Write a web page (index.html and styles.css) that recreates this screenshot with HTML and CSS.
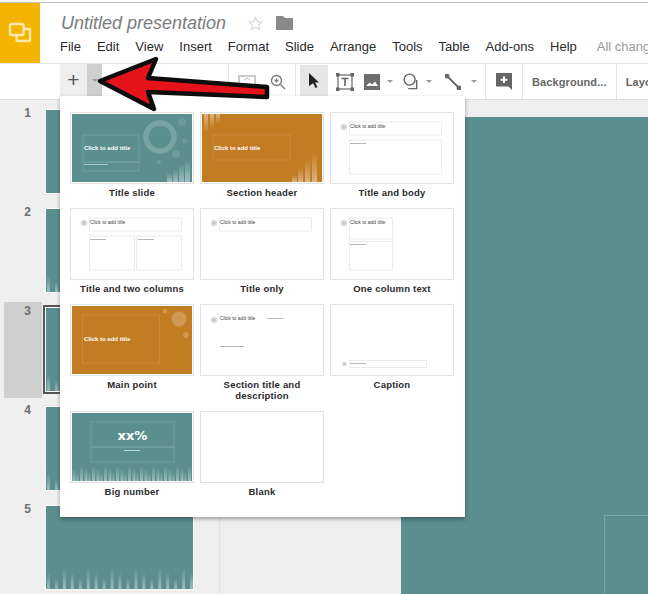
FILE: index.html
```html
<!DOCTYPE html>
<html lang="en">
<head>
<meta charset="utf-8">
<title>Untitled presentation</title>
<link rel="stylesheet" href="styles.css">
</head>
<body>
<svg class="defs" aria-hidden="true">
  <defs>
    <linearGradient id="fade" x1="0" y1="0" x2="0" y2="1">
      <stop offset="0" stop-color="#fff" stop-opacity="0.02"/>
      <stop offset="1" stop-color="#fff" stop-opacity="0.42"/>
    </linearGradient>
    <radialGradient id="blob">
      <stop offset="0" stop-color="#bbb"/>
      <stop offset="1" stop-color="#eee"/>
    </radialGradient>
    <radialGradient id="glow">
      <stop offset="0" stop-color="#fff" stop-opacity="0.2"/>
      <stop offset="0.75" stop-color="#fff" stop-opacity="0.24"/>
      <stop offset="1" stop-color="#fff" stop-opacity="0"/>
    </radialGradient>
    <pattern id="grass" width="24" height="20" patternUnits="userSpaceOnUse">
      <rect x="1" y="4" width="3" height="16" rx="1" fill="url(#fade)"/>
      <rect x="9" y="10" width="3" height="10" rx="1" fill="url(#fade)"/>
      <rect x="17" y="0" width="3" height="20" rx="1" fill="url(#fade)"/>
    </pattern>
    <pattern id="grass-small" width="12" height="14" patternUnits="userSpaceOnUse">
      <rect x="0.500" y="2" width="3" height="12" fill="url(#fade)"/>
      <rect x="4.500" y="6" width="2" height="8" fill="url(#fade)"/>
      <rect x="8" y="0" width="3" height="14" fill="url(#fade)"/>
    </pattern>
  </defs>
</svg>

<div class="app">
  <header class="topbar">
    <div class="logo">
      <svg width="24" height="24" viewBox="0 0 24 24" fill="none" stroke="#fde9b0" stroke-width="2.400">
        <rect x="2" y="3" width="13.500" height="11" rx="1.500"/>
        <path d="M16 8h4.500a1.500 1.500 0 0 1 1.500 1.500v9a1.500 1.500 0 0 1-1.500 1.500H10a1.500 1.500 0 0 1-1.500-1.500V14"/>
      </svg>
    </div>
    <div class="titles">
      <div class="title-row">
        <span class="doc-title">Untitled presentation</span>
        <svg class="star" width="15" height="15" viewBox="0 0 17 17" fill="none" stroke="#d4d4d4" stroke-width="1.200"><path d="M8.500 1.500l2.100 4.900 5.200.5-3.900 3.500 1.200 5.200-4.600-2.800-4.600 2.800 1.200-5.200L1.200 6.900l5.200-.5z"/></svg>
        <svg class="folder" width="17" height="14" viewBox="0 0 17 14"><path d="M0 0h7l2 2h8v12H0z" fill="#8a8a8a"/></svg>
      </div>
      <nav class="menu">
        <span>File</span><span>Edit</span><span>View</span><span>Insert</span><span>Format</span><span>Slide</span><span>Arrange</span><span>Tools</span><span>Table</span><span>Add-ons</span><span>Help</span><span class="saved">All changes saved</span>
      </nav>
    </div>
  </header>

  <div class="toolbar">
    <div class="tool-new">+</div>
    <div class="tool-drop"><i class="caret"></i></div>
    <div class="tool-hidden"></div>
    <div class="sep"></div>
    <svg class="ic-fit" width="18" height="14" viewBox="0 0 18 14" fill="none" stroke="#bbb" stroke-width="1.500"><rect x="1" y="1" width="16" height="12"/><path d="M6 5l3-2 3 2M6 9l3 2 3-2" stroke-width="1"/></svg>
    <svg class="ic-zoom" width="16" height="16" viewBox="0 0 16 16" fill="none" stroke="#777" stroke-width="1.300"><circle cx="6.500" cy="6.500" r="5"/><path d="M10.500 10.500l4.500 4.500M4.500 6.500h4M6.500 4.500v4"/></svg>
    <div class="sep sep-b"></div>
    <div class="tool-cursor">
      <svg width="12" height="15" viewBox="0 0 12 15"><path d="M1 0l10 9.500H7l2.500 4.500-2 1-2.300-4.700L1 13z" fill="#222"/></svg>
    </div>
    <svg class="ic-text" width="18" height="18" viewBox="0 0 18 18" fill="none" stroke="#666" stroke-width="1.200"><rect x="2" y="2" width="14" height="14"/><g fill="#666" stroke="none"><rect x="0" y="0" width="3.500" height="3.500"/><rect x="14.500" y="0" width="3.500" height="3.500"/><rect x="0" y="14.500" width="3.500" height="3.500"/><rect x="14.500" y="14.500" width="3.500" height="3.500"/></g><path d="M5.500 5.500h7M9 5.500v7.500" stroke-width="1.600"/></svg>
    <svg class="ic-image" width="16" height="16" viewBox="0 0 16 16"><path d="M0 0h16v16H0z" fill="#6e6e6e"/><path d="M2 12l3.500-3.500 2.500 2 3-3 3 4.500z" fill="#fff"/></svg>
    <i class="caret caret-image"></i>
    <svg class="ic-shape" width="17" height="17" viewBox="0 0 18 18" fill="none" stroke="#666" stroke-width="1.500"><circle cx="7" cy="7" r="5.800"/><path d="M14.500 7.500V16.500H5.500"/></svg>
    <i class="caret caret-shape"></i>
    <svg class="ic-line" width="16" height="16" viewBox="0 0 16 16" stroke="#666" stroke-width="1.800" fill="#666"><path d="M2 2l12 12"/><circle cx="2" cy="2" r="1.500"/><circle cx="14" cy="14" r="1.500"/></svg>
    <i class="caret caret-line"></i>
    <div class="sep sep-c"></div>
    <svg class="ic-comment" width="16" height="17" viewBox="0 0 16 17"><path d="M0 0h16v17l-3.500-3.500H0z" fill="#666"/><path d="M8 3.500v6.500M4.700 6.750h6.600" stroke="#fff" stroke-width="2"/></svg>
    <div class="sep"></div>
    <div class="tool-text">Background...</div>
    <div class="sep"></div>
    <div class="tool-text">Layout</div>
  </div>

  <main class="workspace">
    <aside class="filmstrip">
      <div class="film-row"><span class="film-num">1</span><div class="film-thumb"></div></div>
      <div class="film-row"><span class="film-num">2</span><div class="film-thumb"><svg class="film-grass" viewBox="0 0 148 20"><rect width="148" height="20" fill="url(#grass)"/></svg></div></div>
      <div class="film-row is-selected"><span class="film-num">3</span><div class="film-thumb"><svg class="film-grass" viewBox="0 0 148 20"><rect width="148" height="20" fill="url(#grass)"/></svg></div></div>
      <div class="film-row"><span class="film-num">4</span><div class="film-thumb"><svg class="film-grass" viewBox="0 0 148 20"><rect width="148" height="20" fill="url(#grass)"/></svg></div></div>
      <div class="film-row"><span class="film-num">5</span><div class="film-thumb"><svg class="film-grass" viewBox="0 0 148 20"><rect width="148" height="20" fill="url(#grass)"/></svg></div></div>
    </aside>
    <section class="canvas">
      <div class="slide"><div class="slide-box"></div></div>
    </section>
  </main>

  <div class="layouts">
    <figure class="layout">
      <svg class="thumb" viewBox="0 0 122 70">
        <rect x="1" y="1" width="120" height="68" fill="#5b8e8e"/>
        <g fill="none" stroke="#7fa8a8" stroke-width="0.600"><rect x="12" y="22" width="56" height="27"/><rect x="12" y="49" width="56" height="9"/></g>
        <circle cx="89" cy="24" r="14" fill="none" stroke="#7aa3a3" stroke-width="5.500"/>
        <g fill="#6f9a9a"><circle cx="111" cy="9" r="4"/><circle cx="114" cy="28" r="2.500"/><circle cx="105" cy="41" r="4"/><circle cx="88" cy="49" r="2"/></g>
        <g fill="url(#fade)"><rect x="96" y="60" width="5" height="9"/><rect x="102" y="57" width="5" height="12"/><rect x="108" y="52" width="5" height="17"/><rect x="114" y="47" width="5" height="22"/></g>
        <text class="t-white" x="13" y="37">Click to add title</text>
        <rect x="13" y="51" width="24" height="1" fill="#a9c6c6"/>
      </svg>
      <figcaption>Title slide</figcaption>
    </figure>
    <figure class="layout">
      <svg class="thumb" viewBox="0 0 122 70">
        <rect x="1" y="1" width="120" height="68" fill="#c27c22"/>
        <rect x="12" y="22" width="77" height="25" fill="none" stroke="#d0954a" stroke-width="0.600"/>
        <g fill="url(#fade)"><rect x="3" y="1" width="4" height="18" transform="rotate(180 5 10)"/><rect x="9" y="1" width="4" height="14" transform="rotate(180 11 8)"/><rect x="15" y="1" width="4" height="9" transform="rotate(180 17 5.500)"/><rect x="91" y="62" width="5" height="7"/><rect x="97" y="55" width="5" height="14"/><rect x="104" y="47" width="5" height="22"/><rect x="111" y="40" width="5" height="29"/></g>
        <text class="t-white" x="13" y="37">Click to add title</text>
      </svg>
      <figcaption>Section header</figcaption>
    </figure>
    <figure class="layout">
      <svg class="thumb" viewBox="0 0 122 70">
        <circle cx="13" cy="14" r="3.500" fill="url(#blob)"/>
        <g class="t-box"><rect x="18.500" y="9" width="92" height="13"/><rect x="18.500" y="27" width="92" height="34"/></g>
        <text class="t-dark" x="19" y="15">Click to add title</text>
        <rect x="19" y="30" width="16" height="0.700" fill="#999"/>
      </svg>
      <figcaption>Title and body</figcaption>
    </figure>

    <figure class="layout">
      <svg class="thumb" viewBox="0 0 122 70">
        <circle cx="13" cy="14" r="3.500" fill="url(#blob)"/>
        <g class="t-box"><rect x="18.500" y="9" width="92" height="13"/><rect x="18.500" y="27" width="45" height="34"/><rect x="65.500" y="27" width="45" height="34"/></g>
        <text class="t-dark" x="19" y="15">Click to add title</text>
        <rect x="19" y="30" width="16" height="0.700" fill="#999"/><rect x="67" y="30" width="16" height="0.700" fill="#999"/>
      </svg>
      <figcaption>Title and two columns</figcaption>
    </figure>
    <figure class="layout">
      <svg class="thumb" viewBox="0 0 122 70">
        <circle cx="13" cy="14" r="3.500" fill="url(#blob)"/>
        <rect class="t-box" x="18.500" y="9" width="92" height="13"/>
        <text class="t-dark" x="19" y="15">Click to add title</text>
      </svg>
      <figcaption>Title only</figcaption>
    </figure>
    <figure class="layout">
      <svg class="thumb" viewBox="0 0 122 70">
        <circle cx="13" cy="14" r="3.500" fill="url(#blob)"/>
        <g class="t-box"><rect x="18.500" y="9" width="43" height="21"/><rect x="18.500" y="32.500" width="43" height="28.500"/></g>
        <text class="t-dark" x="19" y="15">Click to add title</text>
        <rect x="19" y="35" width="16" height="0.700" fill="#999"/>
      </svg>
      <figcaption>One column text</figcaption>
    </figure>

    <figure class="layout">
      <svg class="thumb" viewBox="0 0 122 70">
        <rect x="1" y="1" width="120" height="68" fill="#c27c22"/>
        <rect x="11.500" y="10" width="77" height="48" fill="none" stroke="#d0954a" stroke-width="0.600"/>
        <circle cx="108" cy="14" r="8.500" fill="url(#glow)"/><circle cx="115" cy="30" r="3.200" fill="url(#glow)"/><circle cx="94" cy="6" r="2.500" fill="url(#glow)"/>
        <text class="t-white" x="13" y="36">Click to add title</text>
      </svg>
      <figcaption>Main point</figcaption>
    </figure>
    <figure class="layout">
      <svg class="thumb" viewBox="0 0 122 70">
        <circle cx="13" cy="15" r="3.500" fill="url(#blob)"/>
        <text class="t-dark" x="19" y="15">Click to add title</text>
        <rect x="66" y="13" width="16" height="0.700" fill="#999"/>
        <rect x="19" y="41" width="24" height="0.700" fill="#999"/>
      </svg>
      <figcaption>Section title and description</figcaption>
    </figure>
    <figure class="layout">
      <svg class="thumb" viewBox="0 0 122 70">
        <circle cx="13.500" cy="59" r="2.500" fill="url(#blob)"/>
        <rect class="t-box" x="18.500" y="55.500" width="77" height="7"/>
        <rect x="19" y="58" width="16" height="0.700" fill="#999"/>
      </svg>
      <figcaption>Caption</figcaption>
    </figure>

    <figure class="layout">
      <svg class="thumb" viewBox="0 0 122 70">
        <rect x="1" y="1" width="120" height="68" fill="#5b8e8e"/>
        <g fill="none" stroke="#7fa8a8" stroke-width="0.600"><rect x="20" y="10" width="83" height="25"/><rect x="20" y="35" width="83" height="15"/></g>
        <rect transform="translate(1 55)" width="120" height="14" fill="url(#grass-small)"/>
        <text class="t-big" x="61.500" y="28">xx%</text>
        <rect x="53" y="38" width="16" height="0.800" fill="#d6e6e6"/>
      </svg>
      <figcaption>Big number</figcaption>
    </figure>
    <figure class="layout">
      <svg class="thumb" viewBox="0 0 122 70"></svg>
      <figcaption>Blank</figcaption>
    </figure>
  </div>

  <svg class="arrow" width="190" height="70" viewBox="90 50 190 70">
    <path d="M100 81 L156 59 L148 78 L267 87 L267 97 L148 92 L154 109 Z" fill="#e5121b" stroke="#0c0c0c" stroke-width="4.500" stroke-linejoin="round"/>
  </svg>
</div>
</body>
</html>
```

FILE: styles.css
```css
* { box-sizing: border-box; }

html, body {
  margin: 0;
  height: 594px;
  overflow: hidden;
  background: #fff;
}

body {
  font-family: "Liberation Sans", Arial, sans-serif;
  color: #222;
  padding-top: 2px;
}

.defs { display: block; width: 0; height: 0; }

.app {
  position: relative;
  height: 592px;
  border-top: 1px solid #bdbdbd;
  display: flex;
  flex-direction: column;
  overflow: hidden;
}

/* Header */
.topbar {
  flex: none;
  display: flex;
  height: 61px;
  border-bottom: 1px solid #e2e2e2;
}

.logo {
  flex: none;
  width: 40px;
  height: 60px;
  background: #f4b400;
  display: flex;
  align-items: center;
  justify-content: center;
}

.titles {
  flex: 1;
  min-width: 0;
  padding: 9px 0 0 21px;
  overflow: hidden;
}

.title-row {
  display: flex;
  align-items: center;
  height: 22px;
}

.doc-title {
  font-size: 18px;
  font-style: italic;
  color: #7b7b7b;
}

.star { margin-left: 22px; }
.folder { margin-left: 13px; }

.menu {
  display: flex;
  gap: 16px;
  margin: 5px 0 0 -1px;
  font-size: 13px;
  line-height: 16px;
  white-space: nowrap;
  color: #2a2a2a;
}

.saved { color: #9a9a9a; margin-left: 4px; }

/* Toolbar */
.toolbar {
  flex: none;
  display: flex;
  align-items: center;
  height: 36px;
  padding-left: 60px;
  border-bottom: 1px solid #dedede;
  overflow: hidden;
  background: #fff;
}

.toolbar > * { flex: none; }

.tool-new {
  width: 27px;
  height: 32px;
  margin-bottom: 3px;
  background: #eee;
  color: #555;
  font-size: 21px;
  line-height: 32px;
  text-align: center;
}

.tool-drop {
  width: 15px;
  height: 32px;
  margin-bottom: 3px;
  background: #cfcfcf;
  display: flex;
  align-items: center;
  justify-content: center;
}

.caret {
  display: block;
  width: 0;
  height: 0;
  border: 3px solid transparent;
  border-top: 3px solid #9a9a9a;
  border-bottom: 0;
}

.tool-hidden { width: 126px; height: 1px; }

.sep { width: 1px; height: 35px; background: #e4e4e4; }

.ic-fit { margin-left: 9px; }
.ic-zoom { margin-left: 14px; }
.sep-b { margin-left: 9px; }

.tool-cursor {
  width: 28px;
  height: 32px;
  margin-left: 4px;
  margin-bottom: 2px;
  background: #e6e6e6;
  display: flex;
  align-items: center;
  justify-content: center;
}

.ic-text { margin-left: 8px; }
.ic-image { margin-left: 10px; }
.caret-image { margin-left: 7px; }
.ic-shape { margin-left: 10px; }
.caret-shape { margin-left: 6px; }
.ic-line { margin-left: 13px; }
.caret-line { margin-left: 10px; }
.sep-c { margin-left: 8px; }
.ic-comment { margin: 0 10px; }

.tool-text {
  padding: 0 9px;
  font-size: 11px;
  font-weight: 700;
  letter-spacing: 0.100px;
  color: #666;
  white-space: nowrap;
}

/* Workspace */
.workspace {
  flex: 1;
  min-height: 0;
  display: flex;
  background: #eee;
}

.filmstrip {
  flex: none;
  width: 220px;
  padding-top: 4px;
  border-right: 1px solid #e2e2e2;
  background: #efefef;
}

.film-row {
  display: flex;
  height: 99px;
  margin-left: 4px;
}

.film-num {
  flex: none;
  width: 38px;
  height: 96px;
  padding: 2px 11px 0 0;
  text-align: right;
  font-size: 12px;
  font-weight: 700;
  color: #6e6e6e;
}

.is-selected .film-num { background: #cfcfcf; }

.film-thumb {
  width: 149px;
  height: 85px;
  margin: 5px 0 0 3px;
  border: 1px solid #fff;
  background: #5b8e8e;
  display: flex;
  align-items: flex-end;
}

.is-selected .film-thumb { outline: 2px solid #555; }

.film-grass { display: block; width: 100%; height: 20px; }

.canvas {
  flex: 1;
  min-width: 0;
  padding: 17px 0 0 181px;
}

.slide {
  height: 100%;
  padding: 398px 0 0 203px;
  background: #5b8e8e;
}

.slide-box {
  height: 100%;
  border: 1px solid #7aa5a5;
  border-right: 0;
  border-bottom: 0;
}

/* Layout picker popup */
.layouts {
  position: absolute;
  top: 93px;
  left: 60px;
  width: 405px;
  height: 421px;
  padding: 16px 10px 10px;
  background: #fff;
  box-shadow: 0 2px 4px rgba(0, 0, 0, 0.35);
  display: grid;
  grid-template-columns: repeat(3, 124px);
  column-gap: 6px;
  align-content: start;
}

.layout { margin: 0 0 10px; }

.thumb {
  display: block;
  width: 124px;
  height: 72px;
  border: 1px solid #e2e2e2;
  background: #fff;
}

.layout figcaption {
  margin-top: 3px;
  font-size: 9.500px;
  line-height: 11px;
  font-weight: 700;
  letter-spacing: 0.200px;
  text-align: center;
  color: #2b2b2b;
}

.t-white { font: 700 6px "Liberation Sans", Arial, sans-serif; fill: #fff; }
.t-dark { font: 5px "Liberation Sans", Arial, sans-serif; fill: #444; }
.t-big { font: 700 13px "DejaVu Sans", sans-serif; fill: #fff; text-anchor: middle; }
.t-box { fill: none; stroke: #e6e6e6; stroke-width: 0.800; }

.arrow {
  position: absolute;
  top: 47px;
  left: 90px;
}
```
